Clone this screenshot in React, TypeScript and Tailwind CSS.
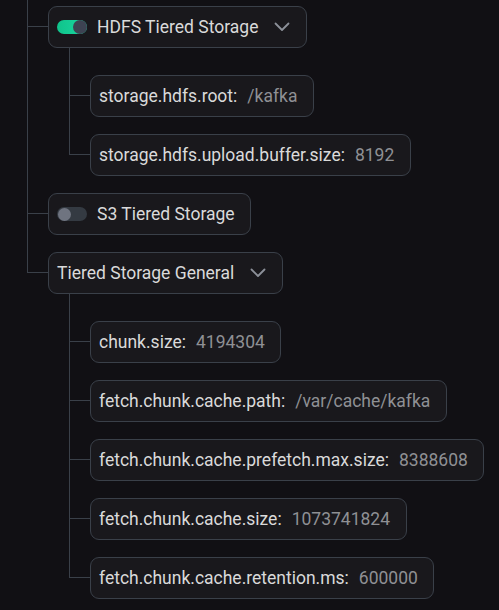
import React from 'react';

type TreeNode = {
  label: string;
  value?: string;
  toggle?: 'on' | 'off';
  expandable?: boolean;
  children?: TreeNode[];
};

const tree: TreeNode[] = [
  {
    label: 'HDFS Tiered Storage',
    toggle: 'on',
    expandable: true,
    children: [
      { label: 'storage.hdfs.root', value: '/kafka' },
      { label: 'storage.hdfs.upload.buffer.size', value: '8192' },
    ],
  },
  { label: 'S3 Tiered Storage', toggle: 'off' },
  {
    label: 'Tiered Storage General',
    expandable: true,
    children: [
      { label: 'chunk.size', value: '4194304' },
      { label: 'fetch.chunk.cache.path', value: '/var/cache/kafka' },
      { label: 'fetch.chunk.cache.prefetch.max.size', value: '8388608' },
      { label: 'fetch.chunk.cache.size', value: '1073741824' },
      { label: 'fetch.chunk.cache.retention.ms', value: '600000' },
    ],
  },
];

function Toggle({ on }: { on: boolean }) {
  if (on) {
    return (
      <span className="flex h-[14px] w-[30px] shrink-0 items-center justify-end rounded-full bg-gradient-to-r from-[#10c38b] to-[#1ad9a2]">
        <span className="h-[14px] w-[14px] rounded-full bg-[#3d4352]" />
      </span>
    );
  }
  return (
    <span className="flex h-[14px] w-[30px] shrink-0 items-center justify-start rounded-full bg-[#343a42] pl-[1px]">
      <span className="h-[13px] w-[13px] rounded-full bg-[#6f7480]" />
    </span>
  );
}

function Chevron() {
  return (
    <svg width="16" height="10" viewBox="0 0 16 10" fill="none" className="ml-4 shrink-0">
      <polyline
        points="1.5,1.5 8,8 14.5,1.5"
        stroke="#8c9099"
        strokeWidth="1.8"
        strokeLinecap="round"
        strokeLinejoin="round"
      />
    </svg>
  );
}

function Box({ node }: { node: TreeNode }) {
  return (
    <div className="flex h-[42px] items-center whitespace-nowrap rounded-[9px] border-[1.5px] border-[#3a4049] bg-[#19181c] pl-2 pr-[15.5px] text-[17.5px] leading-6 text-[#dadada]">
      {node.toggle && <Toggle on={node.toggle === 'on'} />}
      <span className={node.toggle ? 'ml-2.5' : ''}>
        {node.label}
        {node.value !== undefined && ':'}
      </span>
      {node.value !== undefined && <span className="ml-2.5 text-[#8f9094]">{node.value}</span>}
      {node.expandable && <Chevron />}
    </div>
  );
}

// spacing: 'top' = first row in view, 'first' = first child of an expanded group
function Item({ node, spacing, last }: { node: TreeNode; spacing: 'top' | 'first' | 'next'; last: boolean }) {
  const pad = spacing === 'top' ? 'pt-[6px]' : spacing === 'first' ? 'pt-[27px]' : 'pt-[17px]';
  const elbow = spacing === 'top' ? 'h-[27px]' : spacing === 'first' ? 'h-[48px]' : 'h-[38px]';

  return (
    <div className="flex">
      <div className="flex w-[21px] shrink-0 flex-col">
        <div className={`${elbow} border-b-[1.5px] border-l-[1.5px] border-[#3a4049]`} />
        {!last && <div className="flex-1 border-l-[1.5px] border-[#3a4049]" />}
      </div>
      <div className={`flex flex-col items-start ${pad}`}>
        <Box node={node} />
        {node.children && (
          <div className="ml-[21px] flex flex-col">
            {node.children.map((child, i) => (
              <Item
                key={child.label}
                node={child}
                spacing={i === 0 ? 'first' : 'next'}
                last={i === node.children!.length - 1}
              />
            ))}
          </div>
        )}
      </div>
    </div>
  );
}

export default function App() {
  return (
    <div
      className="min-h-screen overflow-hidden bg-[#111014] pl-[27px]"
      style={{ fontFamily: 'Roboto, "Noto Sans", sans-serif' }}
    >
      {tree.map((node, i) => (
        <Item key={node.label} node={node} spacing={i === 0 ? 'top' : 'next'} last={i === tree.length - 1} />
      ))}
    </div>
  );
}
